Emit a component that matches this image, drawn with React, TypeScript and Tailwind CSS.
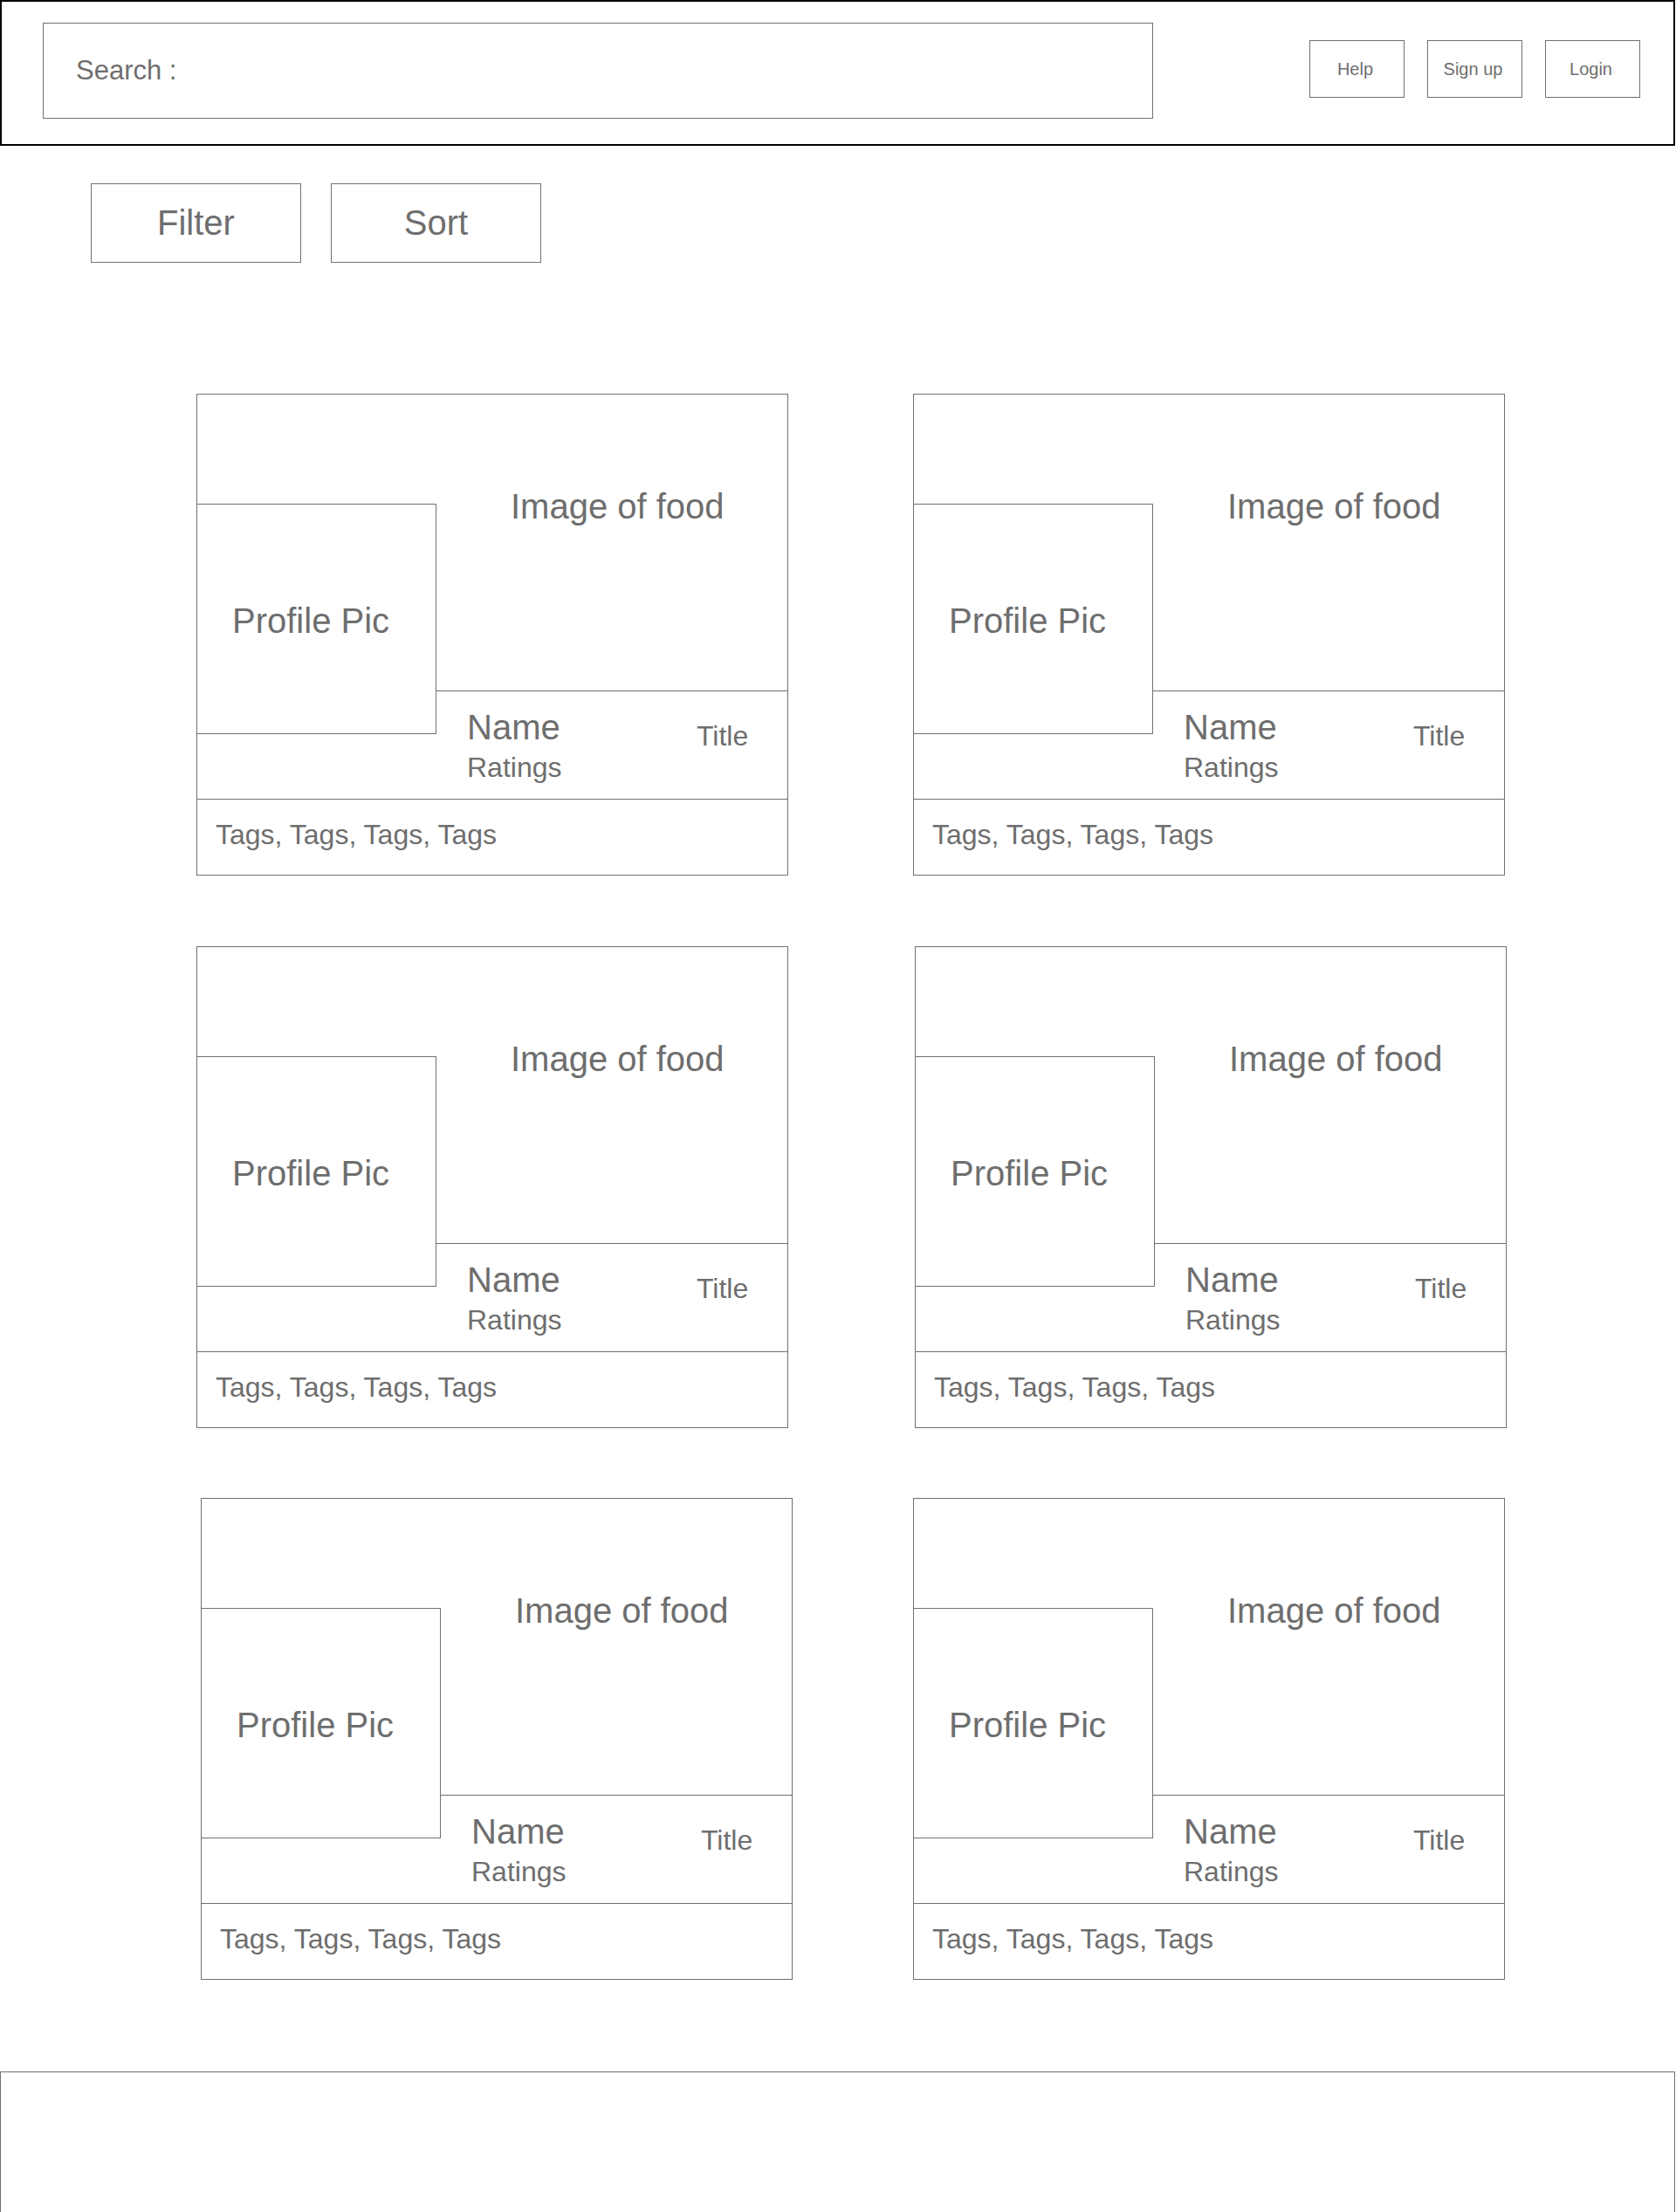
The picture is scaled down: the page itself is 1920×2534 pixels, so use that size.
import React from "react";

const line = "border-[#707070]";
const txt = "text-[#6e6e6e]";

function Card({ className = "" }: { className?: string }) {
  return (
    <div className={`relative flex h-[552px] w-[678px] flex-col border ${line} bg-white ${className}`}>
      <div className={`h-[340px] border-b ${line} pl-[359px] pt-[108px]`}>
        <div className={`text-[40px] leading-none ${txt}`}>Image of food</div>
      </div>
      <div className={`flex h-[124px] border-b ${line} pl-[309px]`}>
        <div className="flex w-[263px] flex-col">
          <div className={`pt-[21px] text-[40px] leading-none ${txt}`}>Name</div>
          <div className={`mt-[10px] text-[32px] leading-none ${txt}`}>Ratings</div>
        </div>
        <div className={`pt-[35px] text-[32px] leading-none ${txt}`}>Title</div>
      </div>
      <div className="h-[86px] pl-[21px] pt-[24px]">
        <div className={`text-[32px] leading-none ${txt}`}>Tags, Tags, Tags, Tags</div>
      </div>
      <div
        className={`absolute left-[-1px] top-[125px] h-[264px] w-[275px] border ${line} bg-white pl-[40px] pt-[113px]`}
      >
        <div className={`text-[40px] leading-none ${txt}`}>Profile Pic</div>
      </div>
    </div>
  );
}

function SmallButton({ label }: { label: string }) {
  return (
    <div
      className={`flex h-[66px] w-[109px] items-center justify-center border-[1.5px] ${line} pr-[4px] text-[20px] ${txt}`}
    >
      {label}
    </div>
  );
}

export default function App() {
  return (
    <div className="h-[2534px] w-[1920px] overflow-hidden bg-white font-['Liberation_Sans',Arial,sans-serif]">
      <header className="box-border flex h-[167px] w-[1919px] items-start border-2 border-black">
        <div
          className={`ml-[47px] mt-[24px] flex h-[110px] w-[1272px] items-center border-[1.5px] ${line} pl-[37px] text-[31px] ${txt}`}
        >
          Search :
        </div>
        <div className="ml-auto mr-[38px] mt-[44px] flex gap-[26px]">
          <SmallButton label="Help" />
          <SmallButton label="Sign up" />
          <SmallButton label="Login" />
        </div>
      </header>

      <div className="mt-[43px] flex gap-[34px] pl-[104px]">
        <div
          className={`flex h-[91px] w-[241px] items-center justify-center border-[1.5px] ${line} pb-[2px] text-[40px] ${txt}`}
        >
          Filter
        </div>
        <div
          className={`flex h-[91px] w-[241px] items-center justify-center border-[1.5px] ${line} pb-[2px] text-[40px] ${txt}`}
        >
          Sort
        </div>
      </div>

      <div className="mt-[150px] flex flex-col gap-y-[80.5px] pl-[225px]">
        <div className="flex gap-x-[143px]">
          <Card />
          <Card />
        </div>
        <div className="flex gap-x-[143px]">
          <Card />
          <Card className="ml-[2px]" />
        </div>
        <div className="flex gap-x-[143px]">
          <Card className="ml-[5px]" />
          <Card className="ml-[-5px]" />
        </div>
      </div>

      <footer className={`mt-[105px] h-[300px] w-[1919px] border-[1.5px] ${line}`} />
    </div>
  );
}
